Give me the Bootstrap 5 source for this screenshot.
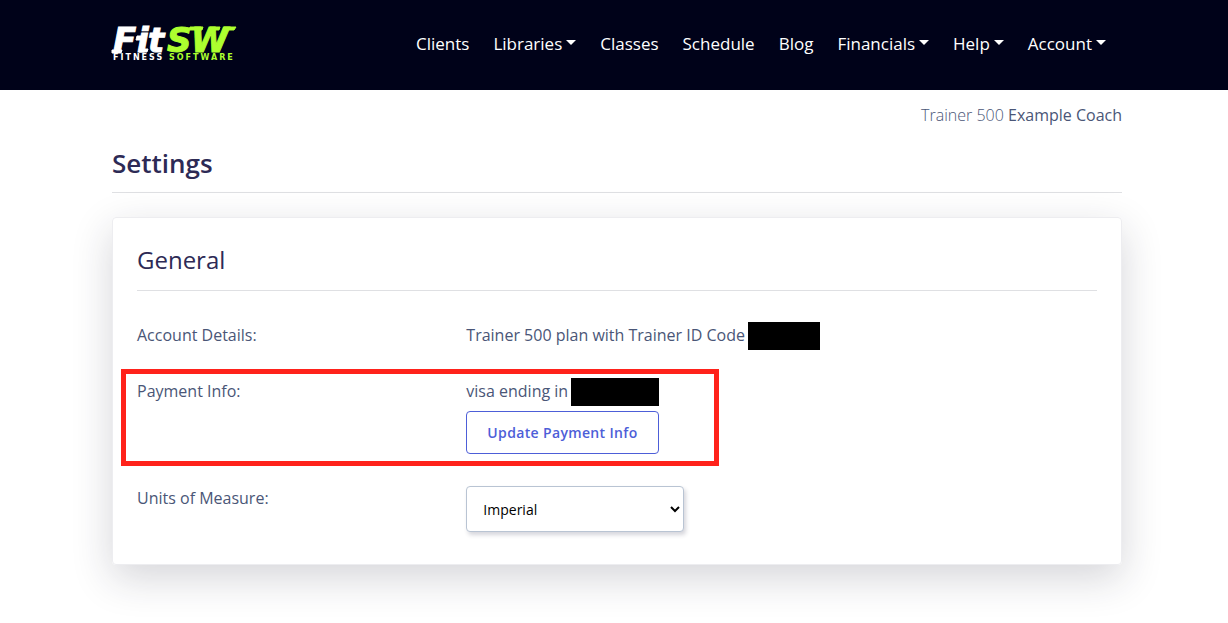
<!DOCTYPE html>
<html lang="en">
<head>
<meta charset="utf-8">
<meta name="viewport" content="width=device-width, initial-scale=1">
<title>Settings - FitSW</title>
<link href="https://cdn.jsdelivr.net/npm/bootstrap@5.3.0/dist/css/bootstrap.min.css" rel="stylesheet">
<style>
  :root { --ink: #2d2a55; --text: #4a5677; --accent: #4d5ed8; }
  body { font-family: "Open Sans", sans-serif; font-size: 16px; line-height: 28px; color: var(--text); background: #fff; min-height: 100vh; }
  .page-width { max-width: 1040px; padding: 0 15px; position: relative; left: 3px; }
  main.page-width { padding-bottom: 56px; }
  .site-nav { background: #000219; min-height: 90px; --bs-navbar-padding-y: 0; --bs-navbar-nav-link-padding-x: 12px; }
  .site-nav .nav-link { color: #fff; font-size: 17px; font-weight: 500; line-height: 24px; padding-top: 7px; padding-bottom: 9px; }
  .site-nav .navbar-nav { margin-right: 4px; }
  .site-nav .dropdown-toggle::after { margin-left: 4px; vertical-align: 5px; border-width: 5px 5px 0; }
  .logo-main { font: italic 800 35px "Open Sans", sans-serif; stroke-width: 1px; }
  .logo-sub { font: bold 8px "DejaVu Sans", sans-serif; letter-spacing: 2px; }
  .logo-wide { font: italic bold 34px "DejaVu Sans", sans-serif; }
  .logo-white { fill: #fff; stroke: #fff; }
  .logo-green { fill: #adff2f; stroke: #adff2f; }
  .account-line { padding-top: 11px; }
  .plan-name { font-weight: 300; }
  h1, h2 { color: var(--ink); }
  h1 { font-size: 26px; line-height: 36px; font-weight: 600; padding-bottom: 11px; }
  h2 { font-size: 24px; line-height: 36px; font-weight: 400; padding-bottom: 12px; }
  .ruled { border-bottom: 1px solid #dfe0e3; }
  .settings-card { border: 1px solid #ededf0; border-radius: 4px; padding: 24px 24px 32px; box-shadow: 0 13px 40px rgba(31, 31, 51, .19); }
  .setting { --bs-gutter-x: 28px; padding-top: 6px; }
  .redacted { display: inline-block; height: 28px; background: #000; vertical-align: top; margin: 1px 0 -1px -1px; }
  .redacted-code { width: 72px; }
  .redacted-card { width: 88px; }
  .payment { margin-top: 22px; }
  .callout { position: absolute; top: -2px; left: -2px; bottom: -12px; width: 598px; max-width: 100%; padding: 0; margin: 0; border: 5px solid #ff221b; pointer-events: none; }
  .btn-payment { --bs-btn-color: var(--accent); --bs-btn-border-color: var(--accent); --bs-btn-hover-color: #fff; --bs-btn-hover-bg: var(--accent); font-size: 14px; line-height: 21px; font-weight: 600; padding: 10px 20px; border-radius: 4px; letter-spacing: .025em; margin-top: 6px; }
  .unit-select { width: 218px; height: 46px; margin-top: 2px; padding: 0 0 0 12px; font-size: 14px; color: #000; background: #fff; border: 1px solid #b9c4d3; border-radius: 4px; box-shadow: 2px 3px 4px rgba(50, 50, 80, .2); }
</style>
</head>
<body>
<nav class="navbar navbar-expand-lg site-nav">
  <div class="container page-width">
    <a class="navbar-brand p-0 m-0" href="#" aria-label="FitSW Fitness Software">
      <svg class="d-block" width="128" height="44" viewBox="0 0 128 44" overflow="visible">
        <text class="logo-main logo-wide" y="29"><tspan class="logo-white" x="1 25 36">Fit</tspan><tspan class="logo-green" x="55 79">SW</tspan></text>
        <path class="logo-white" stroke="none" d="M0 27h10l-1 3H0zM25 13h5v4h-6zM28 26h8l-1 3h-8z"/>
        <path class="logo-green" stroke="none" d="M78 4h13l-1 3H77zM98 4h10l-1 3h-10zM112 4h12l-2 3h-11z"/>
        <text class="logo-sub" x="1" y="37" fill="#fff">FITNESS <tspan fill="#adff2f">SOFTWARE</tspan></text>
      </svg>
    </a>
    <button class="navbar-toggler bg-light" type="button" data-bs-toggle="collapse" data-bs-target="#mainNav" aria-label="Toggle navigation"><span class="navbar-toggler-icon"></span></button>
    <div class="collapse navbar-collapse" id="mainNav">
      <ul class="navbar-nav ms-auto">
        <li class="nav-item"><a class="nav-link" href="#">Clients</a></li>
        <li class="nav-item"><a class="nav-link dropdown-toggle" href="#">Libraries</a></li>
        <li class="nav-item"><a class="nav-link" href="#">Classes</a></li>
        <li class="nav-item"><a class="nav-link" href="#">Schedule</a></li>
        <li class="nav-item"><a class="nav-link" href="#">Blog</a></li>
        <li class="nav-item"><a class="nav-link dropdown-toggle" href="#">Financials</a></li>
        <li class="nav-item"><a class="nav-link dropdown-toggle" href="#">Help</a></li>
        <li class="nav-item"><a class="nav-link dropdown-toggle" href="#">Account</a></li>
      </ul>
    </div>
  </div>
</nav>
<main class="container page-width">
  <div class="account-line text-end"><span class="plan-name">Trainer 500</span> Example Coach</div>
  <h1 class="ruled mt-3 mb-4">Settings</h1>
  <section class="settings-card">
    <h2 class="ruled mb-4">General</h2>
    <div class="row setting">
      <div class="col-4">Account Details:</div>
      <div class="col-8">Trainer 500 plan with Trainer ID Code <span class="redacted redacted-code"></span></div>
    </div>
    <div class="row setting payment position-relative">
      <div class="col-4">Payment Info:</div>
      <div class="col-8">
        <div>visa ending in <span class="redacted redacted-card"></span></div>
        <button type="button" class="btn btn-payment">Update Payment Info</button>
      </div>
      <div class="callout"></div>
    </div>
    <div class="row setting mt-4">
      <div class="col-4"><label for="units">Units of Measure:</label></div>
      <div class="col-8"><select id="units" class="unit-select"><option>Imperial</option><option>Metric</option></select></div>
    </div>
  </section>
</main>
<script src="https://cdn.jsdelivr.net/npm/bootstrap@5.3.0/dist/js/bootstrap.bundle.min.js"></script>
</body>
</html>
